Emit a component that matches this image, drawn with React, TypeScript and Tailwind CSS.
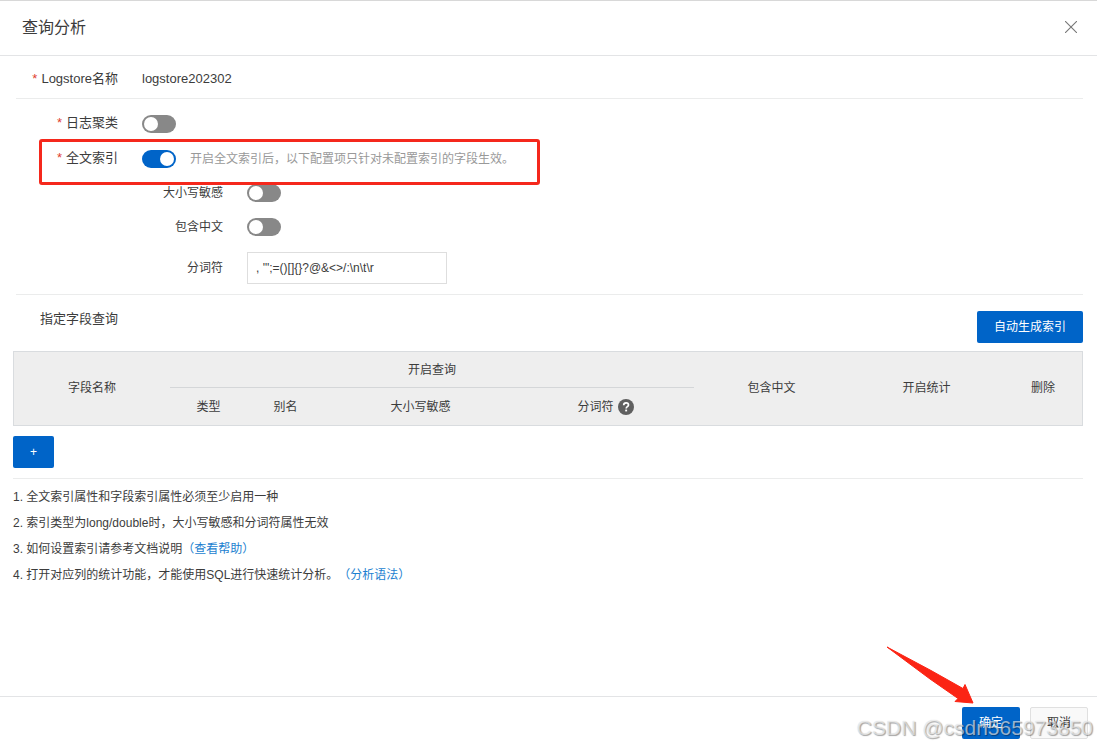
import { useState } from "react";
import type { ReactNode } from "react";

interface SwitchProps {
	id: string;
	defaultChecked?: boolean;
}

function Switch({ id, defaultChecked = false }: SwitchProps) {
	return (
		<input
			id={id}
			type="checkbox"
			role="switch"
			defaultChecked={defaultChecked}
			className="relative h-[18px] w-[34px] shrink-0 cursor-pointer appearance-none rounded-full bg-[#888888] before:absolute before:top-[2px] before:left-[2px] before:size-[14px] before:rounded-full before:bg-white checked:bg-[#0064c8] checked:before:left-[18px]"
		/>
	);
}

function Required() {
	return <span className="mr-1 text-[#e0402e]">*</span>;
}

interface SubRowProps {
	id: string;
	label: string;
	children: ReactNode;
}

function SubRow({ id, label, children }: SubRowProps) {
	return (
		<div className="flex h-[34px] items-center gap-6">
			<label htmlFor={id} className="w-[207px] text-right text-xs">
				{label}
			</label>
			{children}
		</div>
	);
}

function IndexTable() {
	return (
		<table className="mt-2 w-full table-fixed border-separate border-spacing-0 border border-[#d9dcdf] bg-[#eeeeee] text-center text-xs">
			<colgroup>
				<col className="w-[156px]" />
				<col className="w-[77px]" />
				<col className="w-[77px]" />
				<col className="w-[193px]" />
				<col className="w-[177px]" />
				<col className="w-[155px]" />
				<col className="w-[155px]" />
				<col className="w-[78px]" />
			</colgroup>
			<thead>
				<tr className="h-9">
					<th rowSpan={2} className="p-0 pb-[2px] font-normal">
						字段名称
					</th>
					<th colSpan={4} className="border-b border-[#d4d6d8] p-0 font-normal">
						开启查询
					</th>
					<th rowSpan={2} className="p-0 pb-[2px] font-normal">
						包含中文
					</th>
					<th rowSpan={2} className="p-0 pb-[2px] font-normal">
						开启统计
					</th>
					<th rowSpan={2} className="p-0 pb-[2px] font-normal">
						删除
					</th>
				</tr>
				<tr className="h-[37px]">
					<th className="p-0 font-normal">类型</th>
					<th className="p-0 font-normal">别名</th>
					<th className="p-0 font-normal">大小写敏感</th>
					<th className="p-0 font-normal">
						<span className="flex items-center justify-center gap-1">
							分词符
							<svg viewBox="0 0 16 16" className="size-4" aria-hidden="true">
								<circle cx="8" cy="8" r="8" fill="#5f5f5f" />
								<path d="M5.7 6.3C5.7 4.7 6.7 3.9 8.1 3.9s2.4.8 2.4 2.1c0 1.6-2.3 1.7-2.3 3.4" fill="none" stroke="#fff" strokeWidth="1.7" />
								<rect x="7.2" y="10.6" width="1.9" height="1.8" fill="#fff" />
							</svg>
						</span>
					</th>
				</tr>
			</thead>
		</table>
	);
}

export default function App() {
	const [delimiters, setDelimiters] = useState(", '\";=()[]{}?@&<>/:\\n\\t\\r");

	return (
		<div className="relative flex min-h-screen flex-col overflow-hidden border-t border-[#d8d8d8] bg-white font-['Liberation_Sans','Noto_Sans_CJK_SC',sans-serif] text-[#3c3c3c]">
			<header className="flex h-[55px] items-center justify-between border-b border-[#e3e4e6] pr-5 pl-[22px]">
				<h1 className="text-base">查询分析</h1>
				<button type="button" aria-label="关闭" className="cursor-pointer pb-[2px]">
					<svg viewBox="0 0 12 12" className="size-3" fill="none" stroke="#777" strokeWidth="1.1">
						<path d="M0 0l12 12M12 0L0 12" />
					</svg>
				</button>
			</header>

			<main className="flex-1 pr-[14px] pl-[13px]">
				<section className="ml-[3px] flex h-[43px] items-center gap-6 border-b border-[#ebecec] pt-1 text-[13px]">
					<span className="w-[102px] text-right whitespace-nowrap">
						<Required />
						Logstore名称
					</span>
					<span>logstore202302</span>
				</section>

				<section className="ml-[3px] border-b border-[#ebecec] pt-[7px] pb-[10px] text-[13px]">
					<div className="flex h-[35px] items-center gap-6">
						<label htmlFor="cluster" className="w-[102px] pb-[2px] text-right">
							<Required />
							日志聚类
						</label>
						<Switch id="cluster" />
					</div>
					<div className="relative flex h-[35px] items-center">
						<label htmlFor="fulltext" className="mr-6 w-[102px] pb-[2px] text-right">
							<Required />
							全文索引
						</label>
						<Switch id="fulltext" defaultChecked />
						<span className="ml-[14px] text-xs text-[#999999]">开启全文索引后，以下配置项只针对未配置索引的字段生效。</span>
						<div className="pointer-events-none absolute -top-[2px] left-[23px] z-10 h-[46px] w-[501px] rounded-[3px] border-3 border-[#f5281c]" />
					</div>
					<SubRow id="case" label="大小写敏感">
						<Switch id="case" />
					</SubRow>
					<SubRow id="chinese" label="包含中文">
						<Switch id="chinese" />
					</SubRow>
					<div className="mt-2 flex h-8 items-center gap-6">
						<label htmlFor="delimiters" className="w-[207px] text-right text-xs">
							分词符
						</label>
						<input
							id="delimiters"
							type="text"
							value={delimiters}
							onChange={(e) => setDelimiters(e.target.value)}
							className="h-8 w-[200px] border border-[#dedede] px-2 text-xs outline-none"
						/>
					</div>
				</section>

				<section className="pt-4">
					<div className="flex items-start justify-between">
						<h2 className="ml-[27px] text-[13px] leading-4">指定字段查询</h2>
						<button type="button" className="h-8 cursor-pointer rounded-[2px] bg-[#0064c8] px-[17px] text-xs text-white">
							自动生成索引
						</button>
					</div>
					<IndexTable />
					<button type="button" className="mt-[10px] block h-8 w-[41px] cursor-pointer rounded-[2px] bg-[#0064c8] text-xs text-white">
						+
					</button>
				</section>

				<ol className="mt-[10px] border-t border-[#ebecec] pt-[5px] text-xs leading-[26px] [text-spacing-trim:space-all]">
					<li>1. 全文索引属性和字段索引属性必须至少启用一种</li>
					<li>2. 索引类型为long/double时，大小写敏感和分词符属性无效</li>
					<li>
						3. 如何设置索引请参考文档说明
						<a href="#help" className="text-[#1c7fd0]">
							（查看帮助）
						</a>
					</li>
					<li>
						4. 打开对应列的统计功能，才能使用SQL进行快速统计分析。
						<a href="#syntax" className="text-[#1c7fd0]">
							（分析语法）
						</a>
					</li>
				</ol>
			</main>

			<footer className="flex justify-end gap-[10px] border-t border-[#e3e4e6] pt-[10px] pr-[9px] pb-[6px] text-xs">
				<button type="button" className="h-8 w-[58px] cursor-pointer rounded-[2px] bg-[#0064c8] text-white">
					确定
				</button>
				<button type="button" className="h-8 w-[58px] cursor-pointer rounded-[2px] border border-[#e0e0e0] bg-[#f9f9f9]">
					取消
				</button>
			</footer>

			<svg viewBox="0 0 88 58" className="pointer-events-none absolute right-[123px] bottom-[41px] h-[58px] w-[88px]" aria-hidden="true">
				<path d="M1 1L45 24.500L77 42.500L79 38.500L87 57L69 55.500L72 52.500L44 33Z" fill="#fb2414" stroke="#fb2414" strokeWidth="1" strokeLinejoin="round" />
			</svg>
			<div className="pointer-events-none absolute right-1 bottom-[5px] text-[21px] leading-6 text-white/60 [text-shadow:1px_1px_1px_rgb(0_0_0/0.35),0_0_1px_rgb(0_0_0/0.2)]">CSDN @csdn565973850</div>
		</div>
	);
}
